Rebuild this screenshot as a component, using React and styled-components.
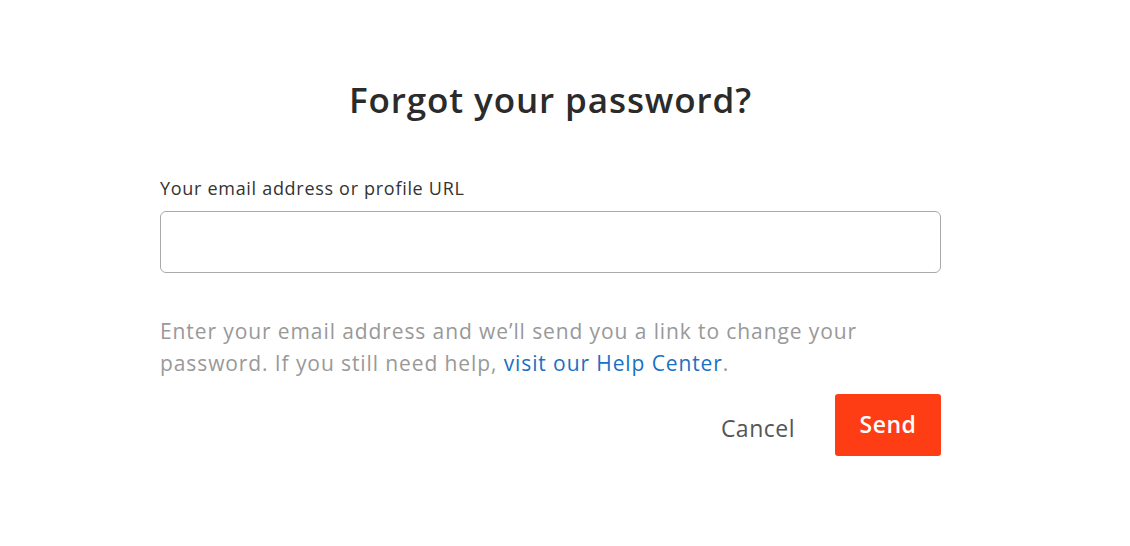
import React from 'react';
import styled, { createGlobalStyle } from 'styled-components';

const GlobalStyle = createGlobalStyle`
    html, body {
        margin: 0;
        padding: 0;
        background: #fff;
    }
    body {
        font-family: "Open Sans", Lato, sans-serif;
    }
`

const Page = styled.div`
    width: 1130px;
    height: 546px;
    display: flex;
    padding: 76px 0 0 160px;
    box-sizing: border-box;
`

const Form = styled.form`
    width: 781px;
    display: flex;
    flex-direction: column;
`

const Title = styled.h1`
    margin: 0;
    text-align: center;
    font-family: "Open Sans", sans-serif;
    font-size: 35px;
    font-weight: 600;
    color: #2b2b2b;
    letter-spacing: 0.9px;
    line-height: 48px;
`

const Label = styled.label`
    margin-top: 52px;
    font-size: 18px;
    letter-spacing: 0.7px;
    color: #333;
    line-height: 24px;
`

const Input = styled.input`
    margin-top: 11px;
    height: 62px;
    box-sizing: border-box;
    border: 1px solid #a9a9a9;
    border-radius: 6px;
    font-size: 18px;
    padding: 0 14px;
    outline: none;
`

const Help = styled.p`
    margin: 42px 0 0;
    font-size: 21px;
    letter-spacing: 0.9px;
    line-height: 32px;
    color: #999;
`

const Link = styled.a`
    color: #1a70c4;
    text-decoration: none;
`

const Actions = styled.div`
    margin-top: 15px;
    display: flex;
    justify-content: flex-end;
    align-items: center;
    gap: 40px;
`

const CancelBtn = styled.button`
    background: none;
    border: none;
    padding: 0;
    margin-top: 6px;
    font-family: "Open Sans", sans-serif;
    font-size: 23px;
    letter-spacing: 0.5px;
    color: #555;
    cursor: pointer;
`

const SendBtn = styled.button`
    width: 106px;
    height: 62px;
    border: none;
    border-radius: 3px;
    background: #ff3d14;
    color: #fff;
    font-family: "Open Sans", sans-serif;
    font-size: 23px;
    letter-spacing: 0.5px;
    font-weight: 600;
    cursor: pointer;
    padding-bottom: 4px;
`

export default function App() {
    return (
        <>
            <GlobalStyle />
            <Page>
                <Form onSubmit={(e) => e.preventDefault()}>
                    <Title>Forgot your password?</Title>
                    <Label htmlFor="email">Your email address or profile URL</Label>
                    <Input id="email" type="text" />
                    <Help>
                        Enter your email address and we’ll send you a link to change your password. If you still need help, <Link href="#">visit our Help Center</Link>.
                    </Help>
                    <Actions>
                        <CancelBtn type="button">Cancel</CancelBtn>
                        <SendBtn type="submit">Send</SendBtn>
                    </Actions>
                </Form>
            </Page>
        </>
    );
}
